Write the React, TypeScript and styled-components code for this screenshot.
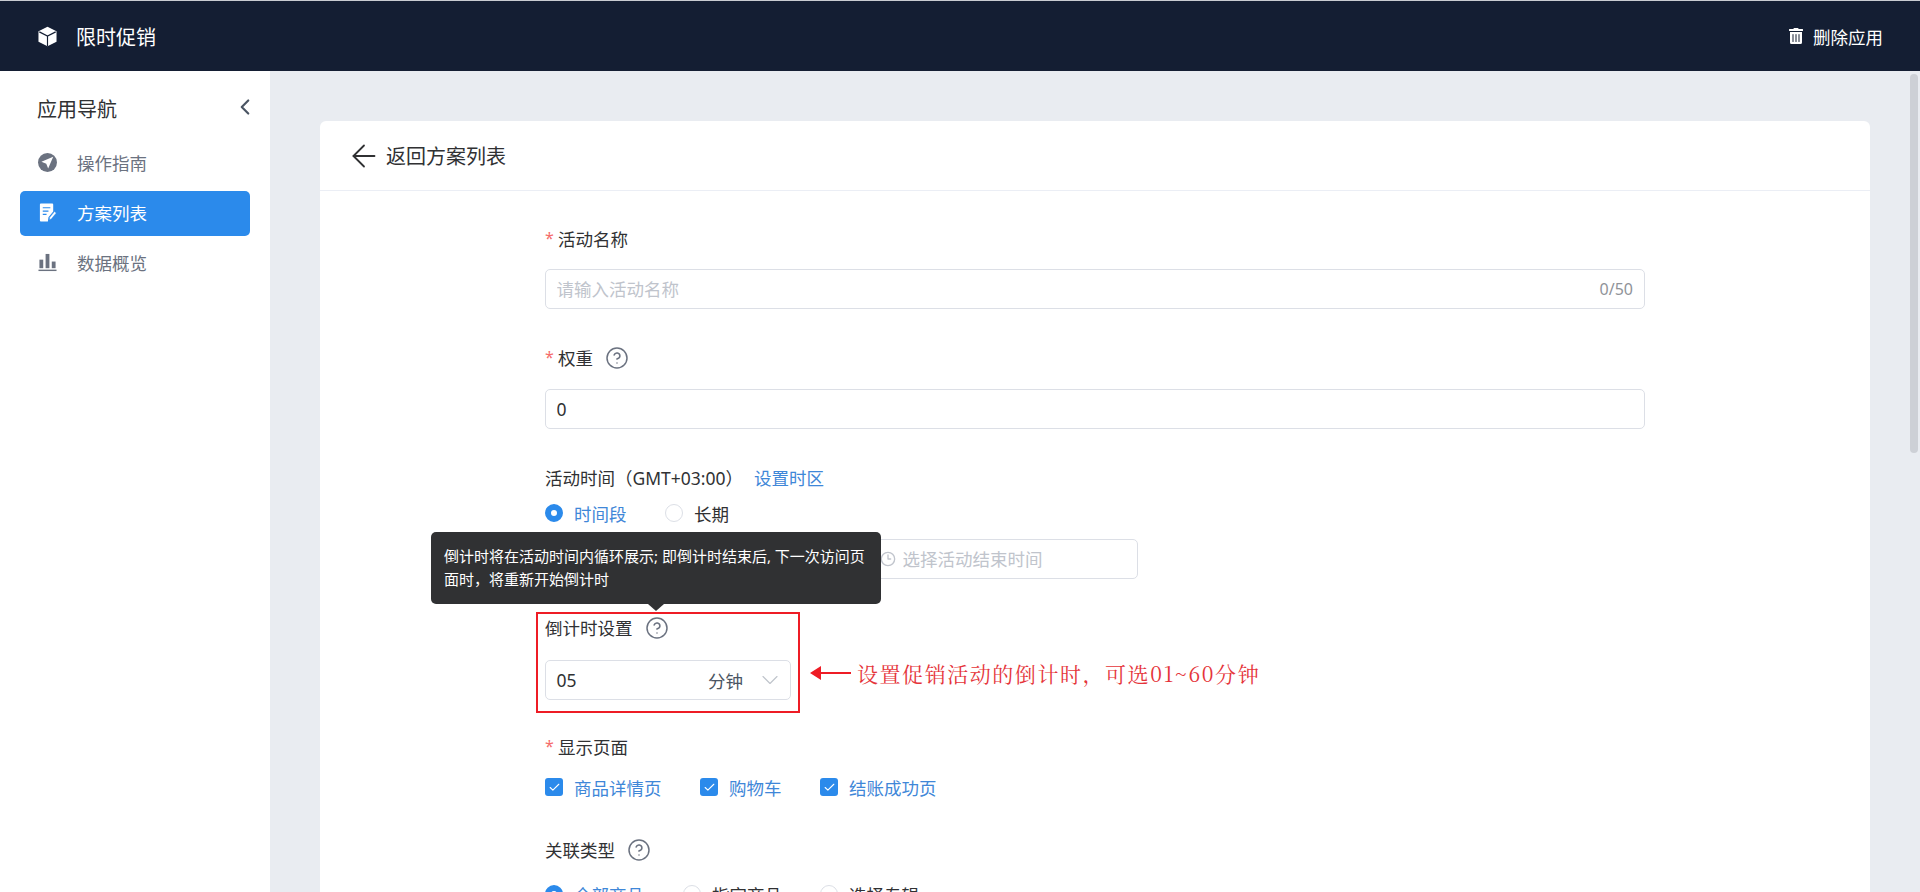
import React from "react";
import styled, { createGlobalStyle } from "styled-components";
import { FaTrashAlt } from "react-icons/fa";
import { ArrowLeft, ChevronLeft, ChevronDown, CircleHelp, Clock3, Check } from "lucide-react";

const Global = createGlobalStyle`
  html, body { margin: 0; padding: 0; height: 100%; overflow: hidden; }
  body { font-family: "Noto Sans", "Noto Sans CJK SC", sans-serif; font-size: 17.5px; color: #303133; }
  * { box-sizing: border-box; }
`;

const Page = styled.div`
  position: relative;
  width: 1920px;
  height: 892px;
  overflow: hidden;
  display: flex;
  flex-direction: column;
  background: #e9ecf1;
`;

const TopBar = styled.header`
  flex: none;
  height: 71px;
  border-top: 1px solid #c9ccd2;
  background: #141e33;
  color: #fff;
  display: flex;
  align-items: center;
  justify-content: space-between;
  padding: 0 37px 0 37px;
`;
const Brand = styled.div`
  display: flex;
  align-items: center;
  gap: 18px;
  font-size: 20px;
`;
const DeleteApp = styled.div`
  display: flex;
  align-items: center;
  gap: 9px;
  font-size: 17.5px;
`;

const Body = styled.div`
  flex: 1;
  display: flex;
  min-height: 0;
`;
const Sidebar = styled.aside`
  flex: none;
  width: 270px;
  background: #fff;
  padding: 17px 20px 0;
`;
const SideHead = styled.div`
  height: 40px;
  margin-bottom: 13px;
  padding: 0 0 0 17px;
  display: flex;
  align-items: center;
  justify-content: space-between;
  font-size: 20px;
  color: #303133;
`;
const Collapse = styled(ChevronLeft)`
  color: #4b5563;
  margin: -2px -8px 0 0;
`;
const NavItem = styled.div<{ $active?: boolean }>`
  height: 45px;
  margin-bottom: 5px;
  padding: 0 0 2px 18px;
  border-radius: 5px;
  display: flex;
  align-items: center;
  gap: 20px;
  background: ${(p) => (p.$active ? "#2b8aeb" : "transparent")};
  color: ${(p) => (p.$active ? "#fff" : "#6b7280")};
`;

const Main = styled.main`
  flex: 1;
  padding: 50px 50px 0;
  min-width: 0;
`;
const Card = styled.section`
  background: #fff;
  border-radius: 6px 6px 0 0;
  height: 100%;
`;
const CardHead = styled.div`
  height: 70px;
  border-bottom: 1px solid #ebeef5;
  display: flex;
  align-items: center;
  gap: 4px;
  padding-left: 26px;
  font-size: 20px;
  color: #303133;
`;
const Form = styled.div`
  width: 1100px;
  margin-left: 225px;
  padding-top: 36px;
  display: flex;
  flex-direction: column;
  gap: 37px;
`;
const Field = styled.div<{ $pull?: number }>`
  position: relative;
  margin-top: ${(p) => p.$pull ?? 0}px;
`;
const Label = styled.div<{ $gap?: number }>`
  height: 24px;
  margin-bottom: ${(p) => p.$gap ?? 18}px;
  display: flex;
  align-items: center;
  line-height: 24px;
  color: #303133;
`;
const Star = styled.span`
  color: #f56c6c;
  font-size: 16px;
  width: 13px;
  flex: none;
  margin-top: -2px;
`;
const Help = styled(CircleHelp)`
  color: #6b7280;
  margin-left: 12px;
`;
const LinkText = styled.span`
  color: #3f87d8;
  margin-left: 11px;
`;
const Box = styled.div<{ $w?: number }>`
  height: 40px;
  width: ${(p) => (p.$w ? `${p.$w}px` : "100%")};
  border: 1px solid #dcdfe6;
  border-radius: 5px;
  background: #fff;
  display: flex;
  align-items: center;
  padding: 0 11px 0 10.5px;
`;
const TextInput = styled.input`
  flex: 1;
  min-width: 0;
  border: 0;
  outline: 0;
  padding: 0;
  background: transparent;
  font: inherit;
  color: #303133;
  &::placeholder { color: #c0c4cc; }
`;
const Counter = styled.span`
  font-size: 16px;
  color: #909399;
`;
const Options = styled.div`
  display: flex;
  align-items: center;
  height: 24px;
`;
const Option = styled.label<{ $w: number; $on?: boolean }>`
  width: ${(p) => p.$w}px;
  flex: none;
  display: flex;
  align-items: center;
  gap: 11px;
  color: ${(p) => (p.$on ? "#3f87d8" : "#303133")};
`;
const RadioDot = styled.span<{ $on?: boolean }>`
  flex: none;
  width: 18px;
  height: 18px;
  border-radius: 50%;
  border: ${(p) => (p.$on ? "6px solid #2b8aeb" : "1px solid #dcdfe6")};
  background: #fff;
`;
const CheckBox = styled.span`
  flex: none;
  width: 18px;
  height: 18px;
  border-radius: 3px;
  background: #2b8aeb;
  color: #fff;
  display: flex;
  align-items: center;
  justify-content: center;
`;
const DateRow = styled.div`
  margin-top: 14px;
  display: flex;
  gap: 43px;
`;
const DateIcon = styled(Clock3)`
  color: #c0c4cc;
  margin: 0 7px 0 5px;
  flex: none;
`;
const SelectUnit = styled.span`
  margin-left: auto;
  margin-right: 13px;
  color: #4b5563;
`;
const SelectValue = styled.span`
  color: #303133;
`;
const Chevron = styled(ChevronDown)`
  color: #c0c4cc;
  margin-right: -5px;
`;
const Tooltip = styled.div`
  position: absolute;
  left: -114px;
  top: -84px;
  width: 450px;
  height: 72px;
  padding: 13px;
  border-radius: 5px;
  background: #303133;
  color: #fff;
  font-size: 15px;
  line-height: 22.5px;
  &::after {
    content: "";
    position: absolute;
    left: 217px;
    bottom: -7px;
    border-left: 8px solid transparent;
    border-right: 8px solid transparent;
    border-top: 7px solid #303133;
  }
`;
const RedFrame = styled.div`
  position: absolute;
  left: -9px;
  top: -4px;
  width: 264px;
  height: 101px;
  border: 2px solid #ee1c25;
  pointer-events: none;
`;
const Note = styled.div`
  position: absolute;
  left: 265px;
  top: 42px;
  display: flex;
  align-items: center;
  gap: 6px;
  white-space: nowrap;
  color: #e5343a;
  font-family: "Noto Serif CJK SC", "Liberation Serif", "Noto Sans CJK SC", serif;
  font-size: 21px;
  letter-spacing: 1.55px;
`;
const ScrollThumb = styled.div`
  position: absolute;
  right: 2px;
  top: 74px;
  width: 8px;
  height: 379px;
  border-radius: 4px;
  background: #cdd0d6;
`;

const CubeIcon = () => (
  <svg width="21" height="21" viewBox="0 0 20 20">
    <path d="M10 .8 18.6 5v10L10 19.4 1.4 15V5z" fill="#fff" />
    <path d="M2.2 5.6 10 9.6l7.8-4M10 9.6v9.4" fill="none" stroke="#141e33" strokeWidth="1.1" />
  </svg>
);
const GuideIcon = () => (
  <svg width="19" height="19" viewBox="0 0 20 20">
    <circle cx="10" cy="10" r="10" fill="currentColor" />
    <path d="M16 4 3.6 9.2l5.1 2 2 5.2z" fill="#fff" />
  </svg>
);
const PlanIcon = () => (
  <svg width="19" height="19" viewBox="0 0 20 20">
    <path d="M2 1.5A1 1 0 0 1 3 .5h12a1 1 0 0 1 1 1V9l-5 6-.6 4.5H3a1 1 0 0 1-1-1z" fill="#fff" />
    <path d="M5 5h8M5 8.5h6M5 12h4" stroke="#2b8aeb" strokeWidth="1.3" fill="none" />
    <path d="m12 18 .4-3 5-6 1.8 1.6-5 6z" fill="#fff" stroke="#2b8aeb" strokeWidth=".5" />
  </svg>
);
const ChartIcon = () => (
  <svg width="19" height="19" viewBox="0 0 20 20" fill="currentColor">
    <rect x="1.5" y="7" width="4" height="9" />
    <rect x="8" y="1" width="4" height="15" />
    <rect x="14.5" y="9" width="4" height="7" />
    <rect x="0.5" y="17.5" width="19" height="1.5" />
  </svg>
);
const ArrowNote = () => (
  <svg width="41" height="16" viewBox="0 0 41 16">
    <path d="M0 8 11 1v6h30v2H11v6z" fill="#ee1c25" />
  </svg>
);

const nav = [
  { label: "操作指南", icon: <GuideIcon /> },
  { label: "方案列表", icon: <PlanIcon />, active: true },
  { label: "数据概览", icon: <ChartIcon /> },
];

export default function App() {
  return (
    <Page>
      <Global />
      <TopBar>
        <Brand>
          <CubeIcon />
          限时促销
        </Brand>
        <DeleteApp>
          <FaTrashAlt size={16} />
          删除应用
        </DeleteApp>
      </TopBar>
      <Body>
        <Sidebar>
          <SideHead>
            应用导航
            <Collapse size={26} strokeWidth={2} />
          </SideHead>
          {nav.map((n) => (
            <NavItem key={n.label} $active={n.active}>
              {n.icon}
              {n.label}
            </NavItem>
          ))}
        </Sidebar>
        <Main>
          <Card>
            <CardHead>
              <ArrowLeft size={36} strokeWidth={1.2} />
              返回方案列表
            </CardHead>
            <Form>
              <Field>
                <Label><Star>*</Star>活动名称</Label>
                <Box>
                  <TextInput placeholder="请输入活动名称" readOnly />
                  <Counter>0/50</Counter>
                </Box>
              </Field>
              <Field>
                <Label $gap={19}><Star>*</Star>权重<Help size={24} strokeWidth={1.5} /></Label>
                <Box>
                  <TextInput value="0" readOnly />
                </Box>
              </Field>
              <Field>
                <Label $gap={11}>活动时间（GMT+03:00）<LinkText>设置时区</LinkText></Label>
                <Options>
                  <Option $w={120} $on><RadioDot $on />时间段</Option>
                  <Option $w={100}><RadioDot />长期</Option>
                </Options>
                <DateRow>
                  <Box $w={275}>
                    <DateIcon size={16} />
                    <TextInput placeholder="选择活动开始时间" readOnly />
                  </Box>
                  <Box $w={275}>
                    <DateIcon size={16} />
                    <TextInput placeholder="选择活动结束时间" readOnly />
                  </Box>
                </DateRow>
              </Field>
              <Field>
                <Label $gap={20}>倒计时设置<Help size={24} strokeWidth={1.5} /></Label>
                <Box $w={246}>
                  <SelectValue>05</SelectValue>
                  <SelectUnit>分钟</SelectUnit>
                  <Chevron size={28} strokeWidth={1} />
                </Box>
                <RedFrame />
                <Tooltip>倒计时将在活动时间内循环展示; 即倒计时结束后, 下一次访问页面时，将重新开始倒计时</Tooltip>
                <Note>
                  <ArrowNote />
                  设置促销活动的倒计时，可选01~60分钟
                </Note>
              </Field>
              <Field $pull={-2}>
                <Label $gap={16}><Star>*</Star>显示页面</Label>
                <Options>
                  {[["商品详情页", 155], ["购物车", 120], ["结账成功页", 130]].map(([t, w]) => (
                    <Option key={t as string} $w={w as number} $on>
                      <CheckBox><Check size={13} strokeWidth={2} /></CheckBox>
                      {t}
                    </Option>
                  ))}
                </Options>
              </Field>
              <Field $pull={2}>
                <Label $gap={20}>关联类型<Help size={24} strokeWidth={1.5} /></Label>
                <Options>
                  <Option $w={138} $on><RadioDot $on />全部商品</Option>
                  <Option $w={137}><RadioDot />指定商品</Option>
                  <Option $w={130}><RadioDot />选择专辑</Option>
                </Options>
              </Field>
            </Form>
          </Card>
        </Main>
      </Body>
      <ScrollThumb />
    </Page>
  );
}
